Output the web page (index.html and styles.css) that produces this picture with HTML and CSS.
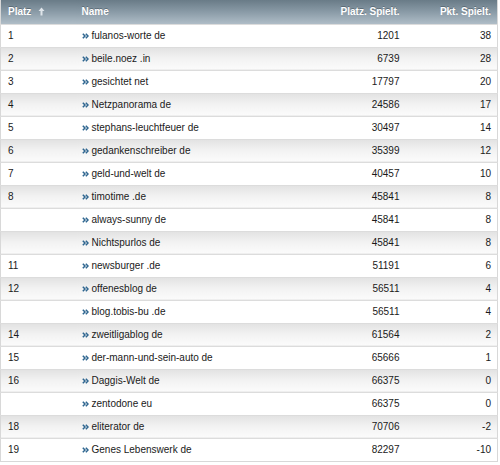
FILE: index.html
```html
<!DOCTYPE html>
<html>
<head>
<meta charset="utf-8">
<link rel="stylesheet" href="styles.css">
</head>
<body>
<svg width="0" height="0" style="position:absolute">
<defs>
<symbol id="dch" viewBox="0 0 7 6"><path d="M0.8 0.8 L3 3 L0.8 5.2 M3.8 0.8 L6 3 L3.8 5.2" fill="none" stroke="#2f6690" stroke-width="1.5"/></symbol>
</defs>
</svg>
<table class="rank">
<thead>
<tr>
<th class="c-platz">Platz <svg class="sort" width="7" height="9" viewBox="0 0 7 9"><path d="M3.5 0.5 L6.5 4 L4.5 4 L4.5 8.5 L2.5 8.5 L2.5 4 L0.5 4 Z" fill="#dfe5ea"/></svg></th>
<th class="c-name">Name</th>
<th class="c-num">Platz. Spielt.</th>
<th class="c-pkt">Pkt. Spielt.</th>
</tr>
</thead>
<tbody>
<tr><td class="c-platz">1</td><td class="c-name"><svg class="ar"><use href="#dch"/></svg>fulanos-worte de</td><td class="c-num">1201</td><td class="c-pkt">38</td></tr>
<tr><td class="c-platz">2</td><td class="c-name"><svg class="ar"><use href="#dch"/></svg>beile.noez .in</td><td class="c-num">6739</td><td class="c-pkt">28</td></tr>
<tr><td class="c-platz">3</td><td class="c-name"><svg class="ar"><use href="#dch"/></svg>gesichtet net</td><td class="c-num">17797</td><td class="c-pkt">20</td></tr>
<tr><td class="c-platz">4</td><td class="c-name"><svg class="ar"><use href="#dch"/></svg>Netzpanorama de</td><td class="c-num">24586</td><td class="c-pkt">17</td></tr>
<tr><td class="c-platz">5</td><td class="c-name"><svg class="ar"><use href="#dch"/></svg>stephans-leuchtfeuer de</td><td class="c-num">30497</td><td class="c-pkt">14</td></tr>
<tr><td class="c-platz">6</td><td class="c-name"><svg class="ar"><use href="#dch"/></svg>gedankenschreiber de</td><td class="c-num">35399</td><td class="c-pkt">12</td></tr>
<tr><td class="c-platz">7</td><td class="c-name"><svg class="ar"><use href="#dch"/></svg>geld-und-welt de</td><td class="c-num">40457</td><td class="c-pkt">10</td></tr>
<tr><td class="c-platz">8</td><td class="c-name"><svg class="ar"><use href="#dch"/></svg>timotime .de</td><td class="c-num">45841</td><td class="c-pkt">8</td></tr>
<tr><td class="c-platz"></td><td class="c-name"><svg class="ar"><use href="#dch"/></svg>always-sunny de</td><td class="c-num">45841</td><td class="c-pkt">8</td></tr>
<tr><td class="c-platz"></td><td class="c-name"><svg class="ar"><use href="#dch"/></svg>Nichtspurlos de</td><td class="c-num">45841</td><td class="c-pkt">8</td></tr>
<tr><td class="c-platz">11</td><td class="c-name"><svg class="ar"><use href="#dch"/></svg>newsburger .de</td><td class="c-num">51191</td><td class="c-pkt">6</td></tr>
<tr><td class="c-platz">12</td><td class="c-name"><svg class="ar"><use href="#dch"/></svg>offenesblog de</td><td class="c-num">56511</td><td class="c-pkt">4</td></tr>
<tr><td class="c-platz"></td><td class="c-name"><svg class="ar"><use href="#dch"/></svg>blog.tobis-bu .de</td><td class="c-num">56511</td><td class="c-pkt">4</td></tr>
<tr><td class="c-platz">14</td><td class="c-name"><svg class="ar"><use href="#dch"/></svg>zweitligablog de</td><td class="c-num">61564</td><td class="c-pkt">2</td></tr>
<tr><td class="c-platz">15</td><td class="c-name"><svg class="ar"><use href="#dch"/></svg>der-mann-und-sein-auto de</td><td class="c-num">65666</td><td class="c-pkt">1</td></tr>
<tr><td class="c-platz">16</td><td class="c-name"><svg class="ar"><use href="#dch"/></svg>Daggis-Welt de</td><td class="c-num">66375</td><td class="c-pkt">0</td></tr>
<tr><td class="c-platz"></td><td class="c-name"><svg class="ar"><use href="#dch"/></svg>zentodone eu</td><td class="c-num">66375</td><td class="c-pkt">0</td></tr>
<tr><td class="c-platz">18</td><td class="c-name"><svg class="ar"><use href="#dch"/></svg>eliterator de</td><td class="c-num">70706</td><td class="c-pkt">-2</td></tr>
<tr><td class="c-platz">19</td><td class="c-name"><svg class="ar"><use href="#dch"/></svg>Genes Lebenswerk de</td><td class="c-num">82297</td><td class="c-pkt">-10</td></tr>
</tbody>
</table>
</body>
</html>
```

FILE: styles.css
```css
html, body {
  margin: 0;
  padding: 0;
  background: #ffffff;
}
.rank {
  width: 498px;
  border-collapse: collapse;
  table-layout: fixed;
  font-family: "Liberation Sans", Arial, sans-serif;
  font-size: 10px;
  color: #1a1a1a;
  border-left: 1px solid #d8d8d8;
  border-right: 1px solid #d8d8d8;
  border-bottom: 1px solid #d8d8d8;
}
.rank th {
  height: 24px;
  padding: 0 6px;
  color: #ffffff;
  font-weight: bold;
  text-shadow: 0 -1px 0 rgba(60, 75, 85, 0.5);
  background: linear-gradient(to bottom, #697b87 0%, #8a9ba7 50%, #afbdc7 100%);
  text-align: left;
  box-sizing: border-box;
}
.rank td {
  height: 23px;
  padding: 0 6px;
  border-top: 1px solid #dcdcdc;
  vertical-align: middle;
}
.rank tbody tr:nth-child(even) td {
  background: linear-gradient(to bottom, #e2e2e2 0%, #f2f2f2 50%, #fbfbfb 100%);
}
.rank th.c-platz, .rank td.c-platz { width: 75px; padding-left: 7px; box-sizing: border-box; }
.rank .c-name { width: 230px; box-sizing: border-box; }
.rank .c-num { width: 100px; text-align: right; box-sizing: border-box; }
.rank .c-pkt { text-align: right; box-sizing: border-box; }
.rank th.c-num, .rank th.c-pkt { text-align: right; }
.sort {
  vertical-align: -1px;
  margin-left: 4px;
}
.ar {
  width: 7px;
  height: 6px;
  margin-right: 3px;
  vertical-align: 0;
}
```
